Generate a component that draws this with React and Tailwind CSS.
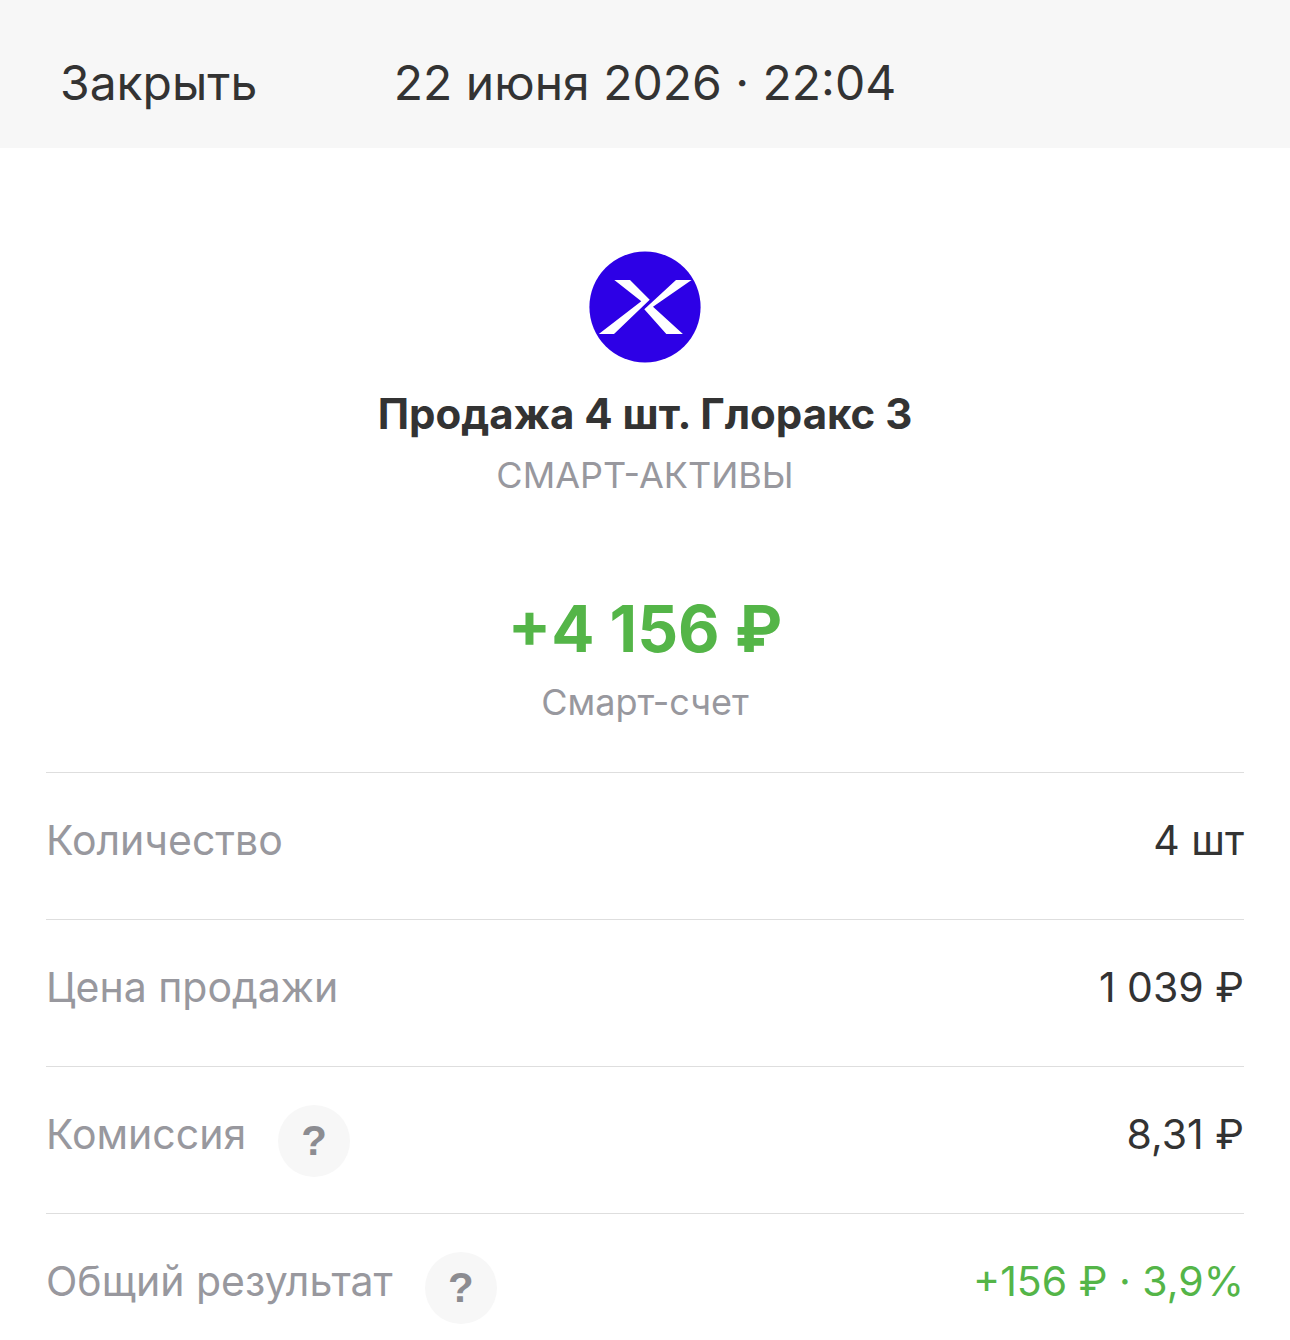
const rows = [
  { label: 'Количество', value: '4 шт' },
  { label: 'Цена продажи', value: '1 039 ₽' },
  { label: 'Комиссия', value: '8,31 ₽', hint: true },
  { label: 'Общий результат', value: '+156 ₽ · 3,9%', hint: true, positive: true },
];

function HintButton({ label }) {
  return (
    <button
      type="button"
      aria-label={`Подробнее: ${label}`}
      className="mt-[14px] flex h-18 w-18 items-center justify-center rounded-full bg-[#f7f7f7] font-['Liberation_Sans',sans-serif] text-[42px] font-bold text-[#8c8c91]"
    >
      ?
    </button>
  );
}

export default function App() {
  return (
    <div className="min-h-screen bg-white font-[Inter,sans-serif] text-[#333333]">
      {/* Header */}
      <header className="grid h-[148px] grid-cols-[1fr_auto_1fr] items-center bg-[#f7f7f7] px-15 pt-[18px] text-5xl leading-[60px]">
        <button type="button" className="justify-self-start">Закрыть</button>
        <h1>22 июня 2026 · 22:04</h1>
      </header>

      <main className="px-[46px]">
        {/* Asset */}
        <section className="flex flex-col items-center pt-[103px] text-center">
          <svg viewBox="0 0 112 112" className="h-28 w-28" aria-hidden="true">
            <circle cx="56" cy="56" r="55.6" fill="#2d00e6" />
            <path
              fill="#fff"
              d="M25.3 29H41l19.7 19.7L25 83H9.8l42.5-32.7zM102.6 29H87L55.3 58.3l22 24.7h16.6L64 55.7z"
            />
          </svg>
          <h2 className="mt-6 text-[42px] leading-[54px] font-bold">Продажа 4 шт. Глоракс 3</h2>
          <p className="mt-[10px] text-[36px] leading-[48px] text-[#98989e]">СМАРТ-АКТИВЫ</p>
        </section>

        {/* Amount */}
        <section className="flex flex-col items-center pt-[90px] pb-[46px] text-center">
          <p className="text-[64px] leading-[80px] font-bold text-[#54b548]">+4 156 ₽</p>
          <p className="mt-[9px] text-[36px] leading-[48px] text-[#98989e]">Смарт-счет</p>
        </section>

        {/* Details */}
        <dl className="text-[41px] leading-[54px]">
          {rows.map((row) => (
            <div key={row.label} className="flex h-[147px] items-start justify-between border-t border-[#dedede] pt-6">
              <dt className="flex items-start gap-8 text-[#98989e]">
                <span className="pt-4">{row.label}</span>
                {row.hint && <HintButton label={row.label} />}
              </dt>
              <dd className={row.positive ? 'pt-4 text-[#54b548]' : 'pt-4'}>{row.value}</dd>
            </div>
          ))}
        </dl>
      </main>
    </div>
  );
}
